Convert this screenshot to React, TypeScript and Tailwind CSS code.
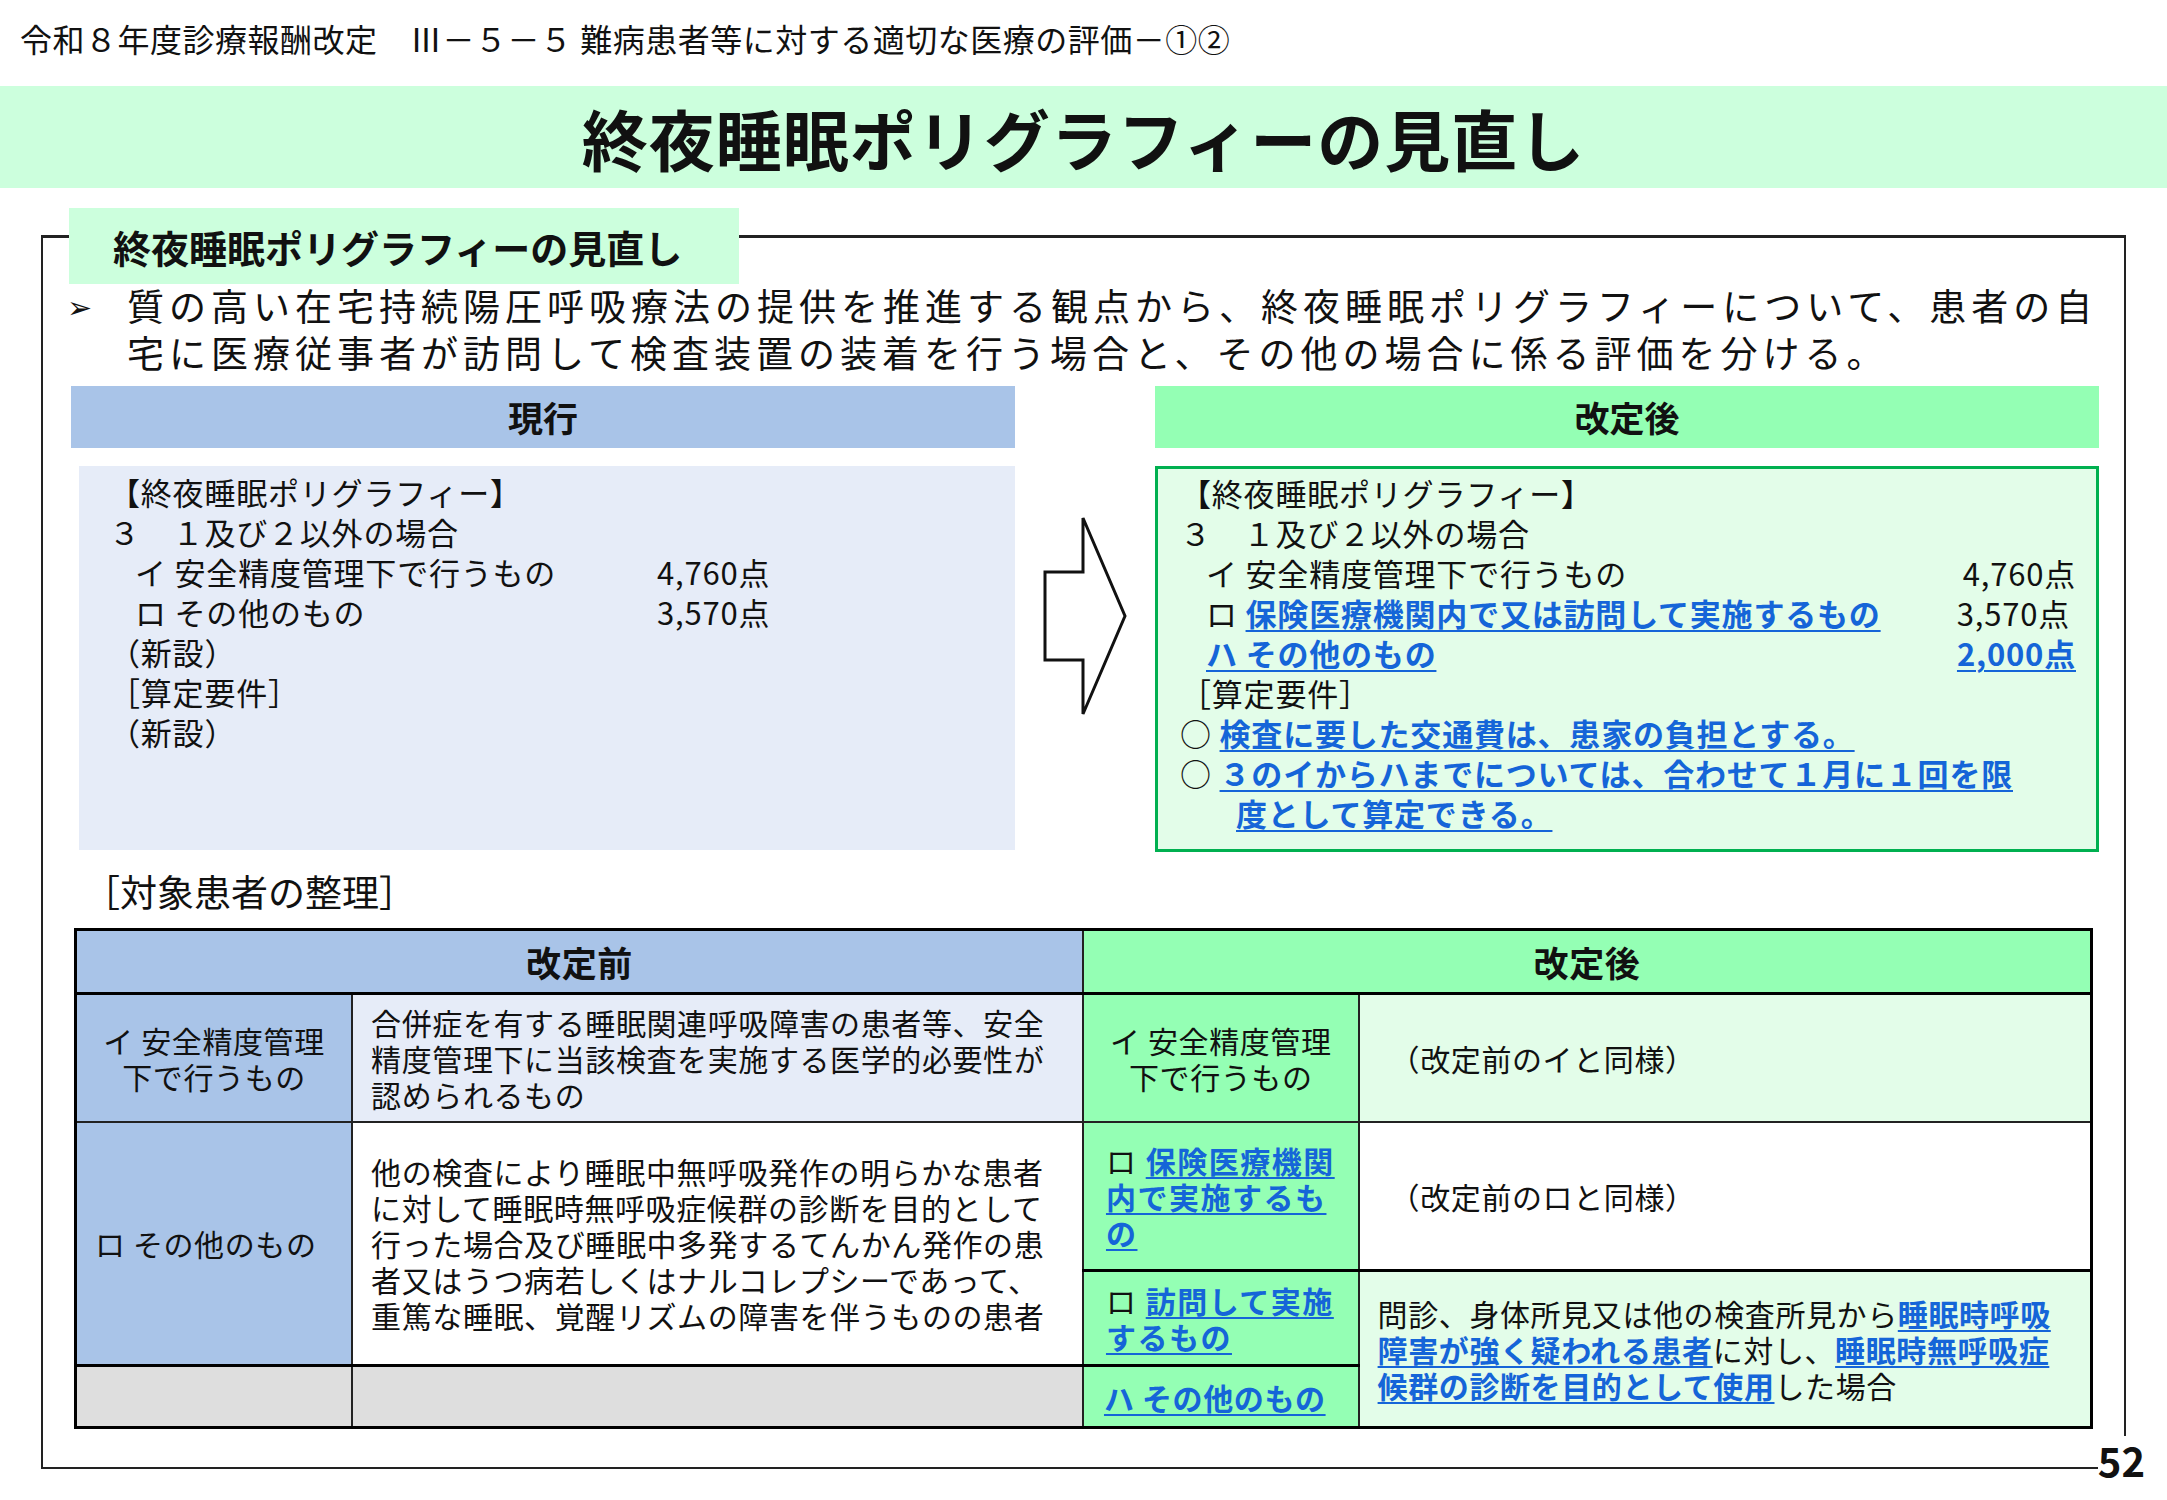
import React from "react";

const F = { fontFamily: '"Noto Sans CJK JP", "Noto Sans", sans-serif' };

function U({ children }: { children: React.ReactNode }) {
  return <span className="font-bold text-[#1565d8] underline underline-offset-4 decoration-2">{children}</span>;
}

export default function App() {
  const td = "border-2 border-[#222] align-middle";
  return (
    <div style={F} className="w-[2167px] h-[1500px] bg-white text-[#111] relative overflow-hidden">
      <div className="pl-[20px] pt-[16px] h-[86px] text-[32px] leading-[44px] tracking-[0.5px]">
        令和８年度診療報酬改定　Ⅲ－５－５ 難病患者等に対する適切な医療の評価－①②
      </div>
      <div className="h-[102px] bg-[#ccffdd] flex items-center justify-center text-[66px] font-bold tracking-[1px]">
        終夜睡眠ポリグラフィーの見直し
      </div>
      <div className="relative mx-[41px] mt-[47px] h-[1234px] border-2 border-[#222] border-t-[3px]">
        <div className="absolute left-[26px] top-[-30px] w-[670px] h-[76px] bg-[#ccffdd] flex items-center pl-[44px] text-[38px] font-bold">
          終夜睡眠ポリグラフィーの見直し
        </div>
        <div className="pt-[44px] pl-[24px] pr-[14px] flex text-[37px] leading-[47px] tracking-[5px]">
          <span className="w-[60px] shrink-0 text-[30px]">➢</span>
          <span>質の高い在宅持続陽圧呼吸療法の提供を推進する観点から、終夜睡眠ポリグラフィーについて、患者の自宅に医療従事者が訪問して検査装置の装着を行う場合と、その他の場合に係る評価を分ける。</span>
        </div>
        <div className="flex mt-[10px] pl-[28px]">
          <div className="w-[944px]">
            <div className="h-[62px] bg-[#a9c4e8] flex items-center justify-center text-[35px] font-bold">現行</div>
            <div className="ml-[8px] mt-[18px] h-[384px] bg-[#e6ecf8] pl-[30px] pt-[6px] text-[31px] leading-[40px] tracking-[0.8px]">
              <div>【終夜睡眠ポリグラフィー】</div>
              <div>３　１及び２以外の場合</div>
              <div className="flex pl-[26px]"><span className="w-[522px]">イ 安全精度管理下で行うもの</span><span>4,760点</span></div>
              <div className="flex pl-[26px]"><span className="w-[522px]">ロ その他のもの</span><span>3,570点</span></div>
              <div>（新設）</div>
              <div>［算定要件］</div>
              <div>（新設）</div>
            </div>
          </div>
          <div className="w-[140px] flex justify-center pt-[130px]">
            <svg width="84" height="200" viewBox="0 0 84 200">
              <path d="M2 56 H40 V2 L82 100 L40 198 V144 H2 Z" fill="white" stroke="#111" strokeWidth="3" />
            </svg>
          </div>
          <div className="w-[944px]">
            <div className="h-[62px] bg-[#94ffb4] flex items-center justify-center text-[35px] font-bold">改定後</div>
            <div className="mt-[18px] h-[386px] bg-[#e3fde9] border-[3px] border-[#00b050] pl-[22px] pr-[20px] pt-[4px] text-[31px] leading-[40px] tracking-[0.8px]">
              <div>【終夜睡眠ポリグラフィー】</div>
              <div>３　１及び２以外の場合</div>
              <div className="flex justify-between pl-[26px]"><span>イ 安全精度管理下で行うもの</span><span>4,760点</span></div>
              <div className="flex justify-between pl-[26px]"><span>ロ <U>保険医療機関内で又は訪問して実施するもの</U></span><span className="pr-[6px]">3,570点</span></div>
              <div className="flex justify-between pl-[26px]"><U>ハ その他のもの</U><U>2,000点</U></div>
              <div>［算定要件］</div>
              <div>○ <U>検査に要した交通費は、患家の負担とする。</U></div>
              <div>○ <U>３のイからハまでについては、合わせて１月に１回を限</U></div>
              <div className="pl-[56px]"><U>度として算定できる。</U></div>
            </div>
          </div>
        </div>
        <div className="pl-[40px] mt-[14px] text-[37px] leading-[50px]">［対象患者の整理］</div>
        <div className="pl-[31px] mt-[12px]">
          <table className="border-collapse border-[3px] border-black text-[30px] leading-[36px] tracking-[0.6px]" style={{ width: 2019 }}>
            <colgroup>
              <col style={{ width: 277 }} /><col style={{ width: 732 }} /><col style={{ width: 276 }} /><col style={{ width: 734 }} />
            </colgroup>
            <tbody>
              <tr className="h-[64px] border-b-[3px] border-black">
                <td colSpan={2} className={`${td} bg-[#a9c4e8] text-center font-bold text-[35px]`}>改定前</td>
                <td colSpan={2} className={`${td} bg-[#94ffb4] text-center font-bold text-[35px]`}>改定後</td>
              </tr>
              <tr className="h-[128px]">
                <td className={`${td} bg-[#a9c4e8] text-center`}>イ 安全精度管理<br />下で行うもの</td>
                <td className={`${td} bg-[#e6ecf8] pl-[18px] pr-[26px]`}>合併症を有する睡眠関連呼吸障害の患者等、安全精度管理下に当該検査を実施する医学的必要性が認められるもの</td>
                <td className={`${td} bg-[#94ffb4] text-center`}>イ 安全精度管理<br />下で行うもの</td>
                <td className={`${td} bg-[#e3fde9] pl-[30px]`}>（改定前のイと同様）</td>
              </tr>
              <tr className="h-[149px]">
                <td rowSpan={2} className={`${td} bg-[#a9c4e8] pl-[18px]`}>ロ その他のもの</td>
                <td rowSpan={2} className={`${td} bg-white pl-[18px] pr-[26px]`}>他の検査により睡眠中無呼吸発作の明らかな患者に対して睡眠時無呼吸症候群の診断を目的として行った場合及び睡眠中多発するてんかん発作の患者又はうつ病若しくはナルコレプシーであって、重篤な睡眠、覚醒リズムの障害を伴うものの患者</td>
                <td className={`${td} bg-[#94ffb4] pl-[22px] pr-[14px] tracking-[1.5px]`}>ロ <U>保険医療機関内で実施するもの</U></td>
                <td className={`${td} bg-white pl-[30px]`}>（改定前のロと同様）</td>
              </tr>
              <tr className="h-[95px]">
                <td className={`${td} border-t-[3px] border-t-black bg-[#94ffb4] pl-[22px] pr-[14px] tracking-[1.5px]`}>ロ <U>訪問して実施するもの</U></td>
                <td rowSpan={2} className={`${td} border-t-[3px] border-t-black bg-[#e3fde9] pl-[18px] pr-[30px]`}>問診、身体所見又は他の検査所見から<U>睡眠時呼吸障害が強く疑われる患者</U>に対し、<U>睡眠時無呼吸症候群の診断を目的として使用</U>した場合</td>
              </tr>
              <tr className="h-[62px]">
                <td className={`${td} border-t-[3px] border-t-black bg-[#dedede]`}></td>
                <td className={`${td} border-t-[3px] border-t-black bg-[#dedede]`}></td>
                <td className={`${td} border-t-[3px] border-t-black bg-[#94ffb4] pl-[20px]`}><U>ハ その他のもの</U></td>
              </tr>
            </tbody>
          </table>
        </div>
      </div>
      <div className="absolute right-[22px] top-[1436px] text-[40px] font-bold leading-[48px] bg-white">52</div>
    </div>
  );
}
